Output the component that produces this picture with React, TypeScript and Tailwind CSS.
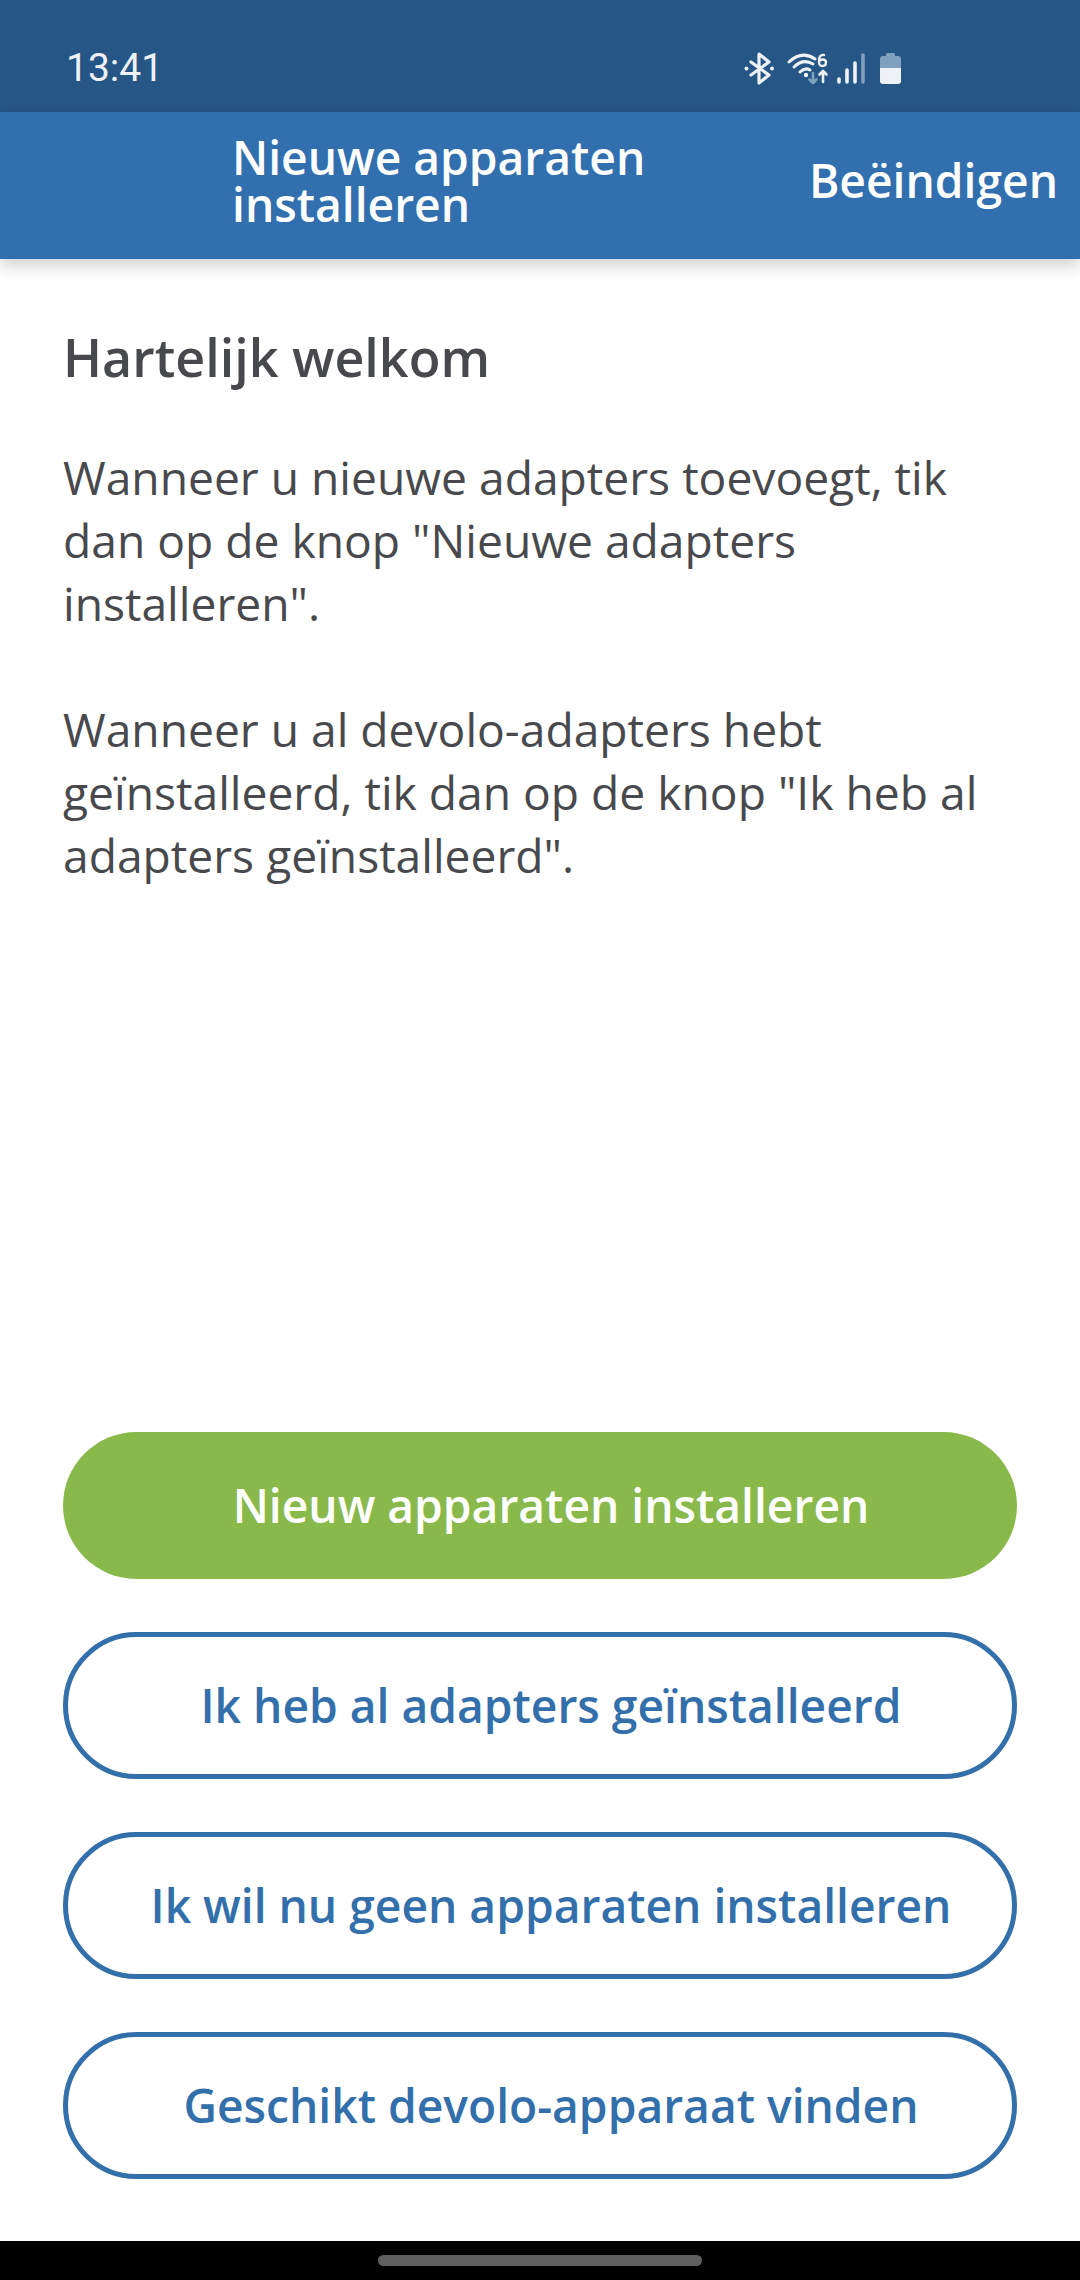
function Btn({ label, green }: { label: string; green?: boolean }) {
  return (
    <button className={green
      ? "flex h-[147px] w-full items-center justify-center rounded-full bg-[#89b94a] pl-[22px] text-[46.2px] font-[560] text-white"
      : "flex h-[147px] w-full items-center justify-center rounded-full border-[5px] border-[#336fab] bg-white pl-[22px] text-[46.2px] font-[560] text-[#336fab]"}>
      {label}
    </button>
  );
}

export default function App() {
  return (
    <div className="flex h-[2280px] w-[1080px] flex-col overflow-hidden bg-white font-['Open_Sans',sans-serif] text-[#48494c]">
      <div className="flex h-[112px] shrink-0 items-center justify-between bg-[#255685] pl-[66px] pr-[177px] pt-[24px]">
        <span className="font-['Roboto',sans-serif] text-[39px] text-[#eef2f7]">13:41</span>
        <svg width="160" height="34" viewBox="0 0 160 34" fill="none" stroke="#eef2f7" strokeLinecap="round" strokeLinejoin="round">
          <path d="M8 11 L26 24 L16 32 V3 L26 11 L8 24" strokeWidth="3.2" />
          <circle cx="3.5" cy="17.5" r="2" fill="#eef2f7" stroke="none" />
          <circle cx="29" cy="17.5" r="2" fill="#eef2f7" stroke="none" />
          <path d="M46 11 Q59 -1 72 8" strokeWidth="3" />
          <path d="M51 16 Q60 7 70 13" strokeWidth="3" />
          <path d="M57 21 Q62 16 67 19" strokeWidth="3" />
          <circle cx="63" cy="24" r="2.2" fill="#eef2f7" stroke="none" />
          <path d="M70 22 V32 M66.5 28.5 L70 32 L73.5 28.5" stroke="#7fa0bf" strokeWidth="2.6" />
          <path d="M80 31 V20 M76.5 23.5 L80 20 L83.5 23.5" strokeWidth="2.6" />
          <path d="M81 4 Q77 3.5 76 8 V11 Q76 15 79.5 15 Q83 15 83 11.5 Q83 8.5 79.5 8.5 Q76.5 8.5 76 11" strokeWidth="2.3" />
          <path d="M96 31 V28 M104 31 V19 M112 31 V12" strokeWidth="3.6" />
          <path d="M120 31 V4" stroke="#7fa0bf" strokeWidth="3.6" />
          <path d="M137 8 Q137 5 140 5 H143 V3.5 Q143 2 144.5 2 H150.5 Q152 2 152 3.5 V5 H155 Q158 5 158 8 V17 H137 Z" fill="#7fa0bf" stroke="none" />
          <path d="M137 17 H158 V30 Q158 33 155 33 H140 Q137 33 137 30 Z" fill="#eef2f7" stroke="none" />
        </svg>
      </div>
      <div className="z-10 flex h-[147px] shrink-0 items-center justify-between bg-[#316fae] pb-[10px] pl-[232px] pr-[22px] font-semibold text-white shadow-[0_6px_16px_rgba(0,0,0,0.2)]">
        <div className="w-[460px] text-[46.2px] leading-[47px]">Nieuwe apparaten installeren</div>
        <div className="text-[46.2px]">Beëindigen</div>
      </div>
      <div className="flex flex-1 flex-col justify-between px-[63px] pb-[62px] pt-[64px]">
        <div>
          <h1 className="text-[52px] font-semibold leading-[68px]">Hartelijk welkom</h1>
          <div className="mt-[55px] text-[46.2px] leading-[63px]">
            <p>Wanneer u nieuwe adapters toevoegt, tik<br />dan op de knop "Nieuwe adapters<br />installeren".</p>
            <p className="mt-[63px]">Wanneer u al devolo-adapters hebt<br />geïnstalleerd, tik dan op de knop "Ik heb al<br />adapters geïnstalleerd".</p>
          </div>
        </div>
        <div className="flex flex-col gap-[53px]">
          <Btn green label="Nieuw apparaten installeren" />
          <Btn label="Ik heb al adapters geïnstalleerd" />
          <Btn label="Ik wil nu geen apparaten installeren" />
          <Btn label="Geschikt devolo-apparaat vinden" />
        </div>
      </div>
      <div className="flex h-[39px] shrink-0 items-start justify-center bg-black pt-[14px]">
        <div className="h-[11px] w-[324px] rounded-full bg-[#5f5f5f]" />
      </div>
    </div>
  );
}
